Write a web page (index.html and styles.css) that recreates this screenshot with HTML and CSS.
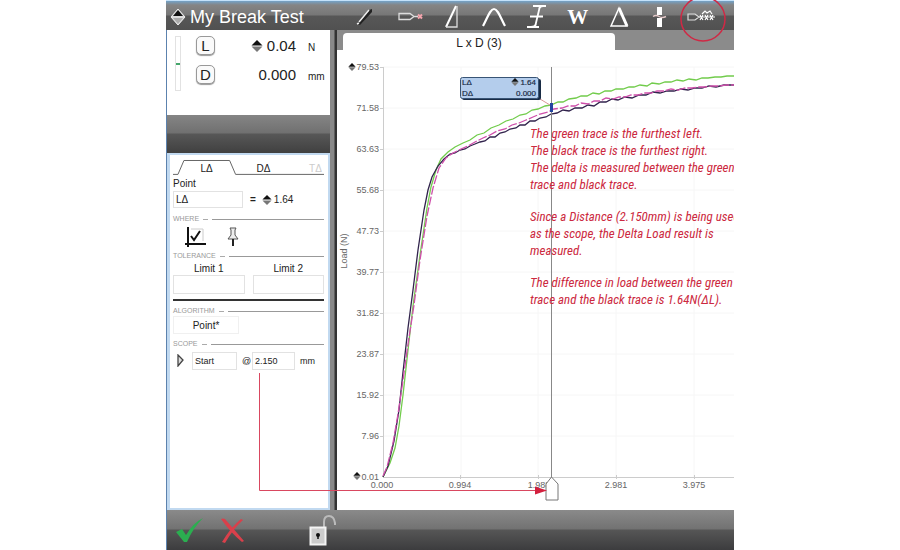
FILE: index.html
```
<!DOCTYPE html>
<html lang="en">

<head>
    <meta charset="UTF-8">
    <meta name="viewport" content="width=device-width, initial-scale=1.0">
    <title>My Break Test</title>
    <link rel="stylesheet" href="styles.css">
</head>

<body>
    <svg class="symbols" aria-hidden="true">
        <symbol id="peak" viewBox="0 0 12 12">
            <path d="M6 0 11.5 5.5H.5z" fill="#111" />
            <path d="M.5 6.5h11L6 12z" fill="#777" />
        </symbol>
    </svg>

    <div class="app">
        <!-- Title and tools -->
        <header class="topbar">
            <svg class="title-icon" viewBox="0 0 16 18">
                <path d="M8 1 15 9 8 17 1 9z" fill="#ddd" stroke="#eee" />
                <path d="M8 2 13 8H3z" fill="#111" />
                <path d="M3 10h10l-5 6z" fill="#aaa" />
            </svg>
            <h1>My Break Test</h1>
            <nav class="tools">
                <button class="tool edit" aria-label="Edit">
                    <svg viewBox="0 0 32 28"><path d="m9 21 12-14 3-1 0 3-12 13z" fill="#222" /><path d="m11 19 10-12m-12 14 2-1" stroke="#eee" stroke-width="1.5" /></svg>
                </button>
                <button class="tool" aria-label="Break">
                    <svg viewBox="0 0 32 28"><path d="M4 10.500h11l4 3-4 3H4zM19 13.500h4" fill="none" stroke="#ddd" stroke-width="1.3" /><path d="m23 11.500 4 4m0-4-4 4" stroke="#f5a4ad" stroke-width="2" /></svg>
                </button>
                <button class="tool" aria-label="Slope">
                    <svg viewBox="0 0 32 28"><path d="M9 24 19 3" fill="none" stroke="#fff" stroke-width="2" /><path d="M20 3v21H9" fill="none" stroke="#ddd" stroke-width="1.3" /></svg>
                </button>
                <button class="tool" aria-label="Peak">
                    <svg viewBox="0 0 32 28"><path d="M5 23C9 16 12 6 16 6s7 10 11 17" fill="none" stroke="#fff" stroke-width="2.2" /></svg>
                </button>
                <button class="tool" aria-label="Average">
                    <svg viewBox="0 0 32 28"><path d="M13 3h13M10 13.500h13M7 24h12M20 3l-5 21M19 6q1-3 4-3M16 21q-1 3-5 3" fill="none" stroke="#fff" stroke-width="1.8" /></svg>
                </button>
                <button class="tool work">W</button>
                <button class="tool" aria-label="Delta">
                    <svg viewBox="0 0 32 28"><path d="m15 5 8 18H7z" fill="none" stroke="#fff" stroke-width="1.5" /><path d="m15 5 8 18" stroke="#fff" stroke-width="3" /></svg>
                </button>
                <button class="tool" aria-label="Split">
                    <svg viewBox="0 0 32 28"><path d="M12 4h5v8h-5zm0 11h5v9h-5z" fill="#fff" /><path d="M8 13.500q3-2 6 0t7 0" fill="none" stroke="#e5caca" stroke-width="1.5" /></svg>
                </button>
                <button class="tool" aria-label="Break count">
                    <svg viewBox="0 0 32 28"><path d="M1 11h7l4 3-4 3H1z" fill="none" stroke="#ddd" stroke-width="1.2" /><path d="M12 14h16M13 12l3 5m0-5-3 5m5-5 3 5m0-5-3 5m5-5 3 5m0-5-3 5M15 11l3-3 2 2 3-2 2 3" fill="none" stroke="#fff" stroke-width="1.2" /></svg>
                </button>
            </nav>
        </header>

        <main class="workspace">
            <aside class="sidebar">
                <!-- Live readings -->
                <section class="readings">
                    <div class="gauge"></div>
                    <div class="reading">
                        <button class="key">L</button>
                        <span class="value"><svg class="peak"><use href="#peak" /></svg>0.04</span>
                        <span class="unit">N</span>
                    </div>
                    <div class="reading">
                        <button class="key">D</button>
                        <span class="value">0.000</span>
                        <span class="unit">mm</span>
                    </div>
                </section>
                <div class="strip"></div>

                <!-- Result settings -->
                <form class="settings">
                    <div class="tabs">
                        <svg class="tab-outline" viewBox="0 0 152 18" preserveAspectRatio="xMinYMin">
                            <path d="M0 15.500h5L11 1.500h46l6 14h89" fill="none" stroke="#666" />
                        </svg>
                        <button type="button" class="tab">LΔ</button>
                        <button type="button" class="tab">DΔ</button>
                        <button type="button" class="tab faded">TΔ</button>
                    </div>
                    <label class="name-label" for="name">Point</label>
                    <div class="name-row">
                        <input id="name" class="name" value="LΔ">
                        <b>=</b>
                        <span class="result"><svg class="peak small"><use href="#peak" /></svg>1.64</span>
                    </div>
                    <h2>WHERE</h2>
                    <div class="where">
                        <button type="button" aria-label="On graph">
                            <svg width="22" height="22" viewBox="0 0 22 22"><path d="M3 1v20M0 18h21" stroke="#111" stroke-width="2" /><path d="M6 3h12v12" fill="none" stroke="#ccc" /><path d="m6 10 3 4 6-9" fill="none" stroke="#111" stroke-width="2" /></svg>
                        </button>
                        <button type="button" aria-label="Pin">
                            <svg width="12" height="22" viewBox="0 0 12 22"><path d="M3 2h6L8 4v5l3 4H1l3-4V4z" fill="#eee" stroke="#555" /><path d="M6 13v7" stroke="#222" stroke-width="2" /></svg>
                        </button>
                    </div>
                    <h2>TOLERANCE</h2>
                    <div class="limits">
                        <label>Limit 1<input></label>
                        <label>Limit 2<input></label>
                    </div>
                    <h2>ALGORITHM</h2>
                    <button type="button" class="algorithm">Point*</button>
                    <h2>SCOPE</h2>
                    <div class="scope">
                        <svg width="8" height="13" viewBox="0 0 8 13"><path d="m1 1 5 5-5 6z" fill="#ddd" stroke="#444" stroke-width="1.3" /></svg>
                        <input class="start" value="Start" aria-label="Scope">
                        <label for="distance">@</label>
                        <input id="distance" class="distance" value="2.150">
                        <span>mm</span>
                    </div>
                </form>
            </aside>
            <div class="divider"></div>

            <!-- Graph -->
            <section class="graph">
                <div class="graph-tabs">
                    <button class="graph-tab">L x D (3)</button>
                </div>
                <svg class="plot" viewBox="337 50 397 460">
                    <path class="grid" d="M383 67h351M383 108h351M383 149h351M383 190h351M383 231h351M383 272h351M383 313h351M383 354h351M383 395h351M383 436h351M461 67v410M538 67v410M616 67v410M694 67v410" />
                    <path class="axis" d="M383.500 67v410.500H734M380 67.500h3M380 108.500h3M380 149.500h3M380 190.500h3M380 231.500h3M380 272.500h3M380 313.500h3M380 354.500h3M380 395.500h3M380 436.500h3M460.500 475v4M538.500 475v4M616.500 475v4M694.500 475v4" />
                    <g class="y-labels">
                        <text x="379" y="70">79.53</text>
                        <text x="379" y="111">71.58</text>
                        <text x="379" y="152">63.63</text>
                        <text x="379" y="193">55.68</text>
                        <text x="379" y="234">47.73</text>
                        <text x="379" y="275">39.77</text>
                        <text x="379" y="316">31.82</text>
                        <text x="379" y="357">23.87</text>
                        <text x="379" y="398">15.92</text>
                        <text x="379" y="439">7.96</text>
                        <text x="379" y="480">0.01</text>
                    </g>
                    <use href="#peak" x="348" y="63" width="8" height="8" />
                    <use href="#peak" x="353" y="472" width="8" height="8" />
                    <g class="x-labels">
                        <text x="382" y="488">0.000</text>
                        <text x="460" y="488">0.994</text>
                        <text x="539" y="488">1.988</text>
                        <text x="616" y="488">2.981</text>
                        <text x="694" y="488">3.975</text>
                    </g>
                    <text class="axis-title" transform="translate(347 251) rotate(-90)">Load (N)</text>

                    <path class="trace green" d="M383 477 390 463 395 448 399 426 403 395 408 350 413 306 420 255 427 208 431 187 436 170 441 159 448 152 455 147 463 143 470 140 477 135 484 133 491 128 499 125 506 121 513 119 520 115 526 114 532 110 538 109 545 106 551 105 558 102 563 102 569 99 576 98 581 96 587 96 593 93 599 94 605 91 611 91 616 89 623 89 629 87 634 87 640 85 647 86 652 83 659 84 665 82 671 82 677 80 683 81 689 79 696 80 702 78 708 78 715 77 721 77 727 76 734 76" />
                    <path class="trace black" d="M383 477 388 466 394 441 399 410 403 372 408 328 413 290 418 250 424 210 428 190 432 177 438 166 444 159 450 154 455 153 460 150 465 149 470 146 475 144 480 142 485 141 490 137 495 137 500 133 505 132 510 129 516 128 520 125 525 125 530 121 535 121 540 118 546 117 551 114 557 113 563 110 569 111 575 108 582 108 588 105 594 106 600 102 606 102 612 99 618 100 625 97 632 98 639 95 646 95 653 92 660 93 667 91 674 91 681 89 688 90 695 88 702 88 709 86 716 87 724 85 734 85" />
                    <path class="trace magenta" d="M383 476 387 467 393 443 398 414 403 380 408 344 414 305 420 260 427 216 433 188 439 168 446 158 453 153 461 149 468 146 475 142 483 138 490 135 497 131 505 129 512 125 519 123 526 120 533 117 540 114 548 112 554 109 562 108 568 106 575 106 581 103 588 104 594 101 600 101 606 98 613 99 619 97 625 97 631 95 638 95 644 93 651 93 657 91 664 91 671 89 678 90 685 88 692 88 698 87 705 87 712 86 719 86 726 85 734 85" />

                    <!-- Scope cursor -->
                    <path d="M551.500 67v410" stroke="#888" />
                    <path d="M540 99 550 105" stroke="#d99" />
                    <path d="M551.500 103v9" stroke="#2446a0" stroke-width="3" />
                    <path d="M551.500 477 558 484v16h-12v-16z" fill="#fff" stroke="#777" />

                    <g class="callout">
                        <rect x="462" y="79" width="79" height="21" rx="2" fill="#192b45" />
                        <rect x="460.500" y="77.500" width="78" height="21" rx="2" fill="#b4cdec" stroke="#385475" />
                        <text x="462" y="85">LΔ</text>
                        <text x="462" y="96">DΔ</text>
                        <use href="#peak" x="511" y="78" width="8" height="8" />
                        <text x="536" y="85" text-anchor="end">1.64</text>
                        <text x="536" y="96" text-anchor="end">0.000</text>
                    </g>
                </svg>
                <div class="note">
                    <p>The green trace is the furthest left.<br>The black trace is the furthest right.<br>The delta is measured between the green<br>trace and black trace.</p>
                    <p>Since a Distance (2.150mm) is being used<br>as the scope, the Delta Load result is<br>measured.</p>
                    <p>The difference in load between the green<br>trace and the black trace is 1.64N(ΔL).</p>
                </div>
            </section>
        </main>

        <footer class="actions">
            <button class="accept" aria-label="Accept">
                <svg width="30" height="28" viewBox="0 0 30 28"><path d="m1 16 6-3 4 6Q18 7 28 2 18 12 12 26H9z" fill="#2bae50" /></svg>
            </button>
            <button class="cancel" aria-label="Cancel">
                <svg width="28" height="28" viewBox="0 0 28 28"><path d="M2 3q2-1 4 0l19 22-2 1Q12 17 2 3zM22 3l2 1Q14 13 6 27l-3-1Q12 11 22 3z" fill="#d9404b" /></svg>
            </button>
            <button class="lock" aria-label="Unlock">
                <svg width="28" height="34" viewBox="0 0 28 34"><path d="M15 14V9q0-6 5-6t6 7v2" fill="none" stroke="#bbb" stroke-width="2" /><path d="M1.500 14.500h15v17h-15z" fill="#ccc" stroke="#f4f4f4" stroke-width="2" /><circle cx="9" cy="22" r="2" fill="#111" /><path d="M9 22v4" stroke="#111" stroke-width="1.500" /></svg>
            </button>
        </footer>

        <!-- Red markup over the whole window -->
        <svg class="markup" viewBox="0 0 568 550">
            <circle cx="537" cy="19" r="22" fill="none" stroke="#cf2945" stroke-width="1.500" />
            <path d="M93.500 373v117.500H372" fill="none" stroke="#d94860" />
            <path d="m369 486.500 12 4-12 4z" fill="#d3203e" />
        </svg>
    </div>
</body>

</html>
```
FILE: styles.css
```
/* General Styles */
* {
    box-sizing: border-box;
}

body {
    margin: 0;
    background: #fff;
    color: #222;
    font-family: "Liberation Sans", Arial, sans-serif;
    font-size: 10px;
}

button {
    padding: 0;
    border: none;
    background: none;
    color: inherit;
    font: inherit;
    cursor: pointer;
}

input {
    min-width: 0;
    border: 1px solid #e2e2e2;
    background: #fff;
    color: inherit;
    font: inherit;
}

svg {
    display: block;
}

.symbols {
    position: absolute;
    width: 0;
    height: 0;
}

.app {
    position: relative;
    display: flex;
    flex-direction: column;
    max-width: 568px;
    min-height: 100vh;
    margin: 0 auto;
    overflow: hidden;
}

/* Top bar */
.topbar {
    display: flex;
    align-items: center;
    height: 30px;
    padding: 2px 15px 0 4px;
    border-top: 1px solid #c4e2fa;
    background: linear-gradient(#74a3c8, #858585 4px, #777 14px, #575757 15px, #515151);
    color: #fff;
}

.title-icon {
    width: 16px;
    height: 18px;
}

h1 {
    margin: 0 0 0 4px;
    font-size: 18px;
    font-weight: normal;
    line-height: 26px;
    white-space: nowrap;
}

.tools {
    display: flex;
    flex: 0 1 371px;
    justify-content: space-between;
    margin-left: auto;
}

.tool {
    width: 32px;
    height: 28px;
}

.edit {
    margin-right: 5px;
}

.work {
    font: bold 21px/28px "Liberation Serif", serif;
}

/* Sidebar */
.workspace {
    display: flex;
    flex: 1;
}

.sidebar {
    display: flex;
    flex: 0 0 164px;
    flex-direction: column;
    min-width: 0;
    border-left: 1px solid #5c82ae;
}

.readings {
    position: relative;
    display: flex;
    flex-direction: column;
    gap: 8px;
    height: 85px;
    padding: 5px 4px 0 29px;
}

.gauge {
    position: absolute;
    top: 6px;
    left: 8px;
    width: 6px;
    height: 55px;
    border: 1px solid #e2e2e2;
    background: linear-gradient(#fff 26px, #45a66b 26px, #45a66b 28px, #fff 28px);
}

.reading {
    display: flex;
    align-items: center;
    height: 21px;
}

.key {
    width: 19px;
    height: 19px;
    border: 1px solid #999;
    border-radius: 5px;
    box-shadow: 0 1px 1px #999;
    background: #fafafa;
    font-size: 15px;
    line-height: 17px;
}

.value {
    display: flex;
    flex: 1;
    align-items: center;
    justify-content: flex-end;
    gap: 4px;
    font-size: 15px;
}

.peak {
    width: 12px;
    height: 12px;
}

.peak.small {
    width: 10px;
    height: 10px;
}

.unit {
    width: 18px;
    margin-left: 12px;
    padding-top: 4px;
}

.strip {
    height: 38px;
    background: linear-gradient(#858585, #707070 18px, #575757 19px, #404040);
}

.settings {
    flex: 1;
    padding: 4px 4px 4px 3px;
    border: solid #c1d9f0;
    border-width: 2px 2px 2px 3px;
}

.tabs {
    position: relative;
    display: flex;
    height: 18px;
    overflow: hidden;
}

.tab-outline {
    position: absolute;
    inset: 0;
    width: 100%;
    height: 100%;
}

.tab {
    position: relative;
    flex: 0 0 57px;
    padding-left: 10px;
}

.tab.faded {
    flex: 1;
    padding-left: 20px;
    color: #ccc;
}

.name-label {
    display: block;
    line-height: 13px;
}

.name-row {
    display: flex;
    align-items: center;
    height: 19px;
}

.name {
    width: 70px;
    height: 17px;
    margin-right: 7px;
}

.result {
    display: flex;
    align-items: center;
    gap: 2px;
    margin-left: 6px;
}

h2 {
    display: flex;
    align-items: center;
    gap: 4px;
    margin: 5px 0 0;
    color: #999;
    font-size: 7px;
    font-weight: normal;
    line-height: 10px;
}

h2::before {
    order: 1;
    width: 5px;
    height: 1px;
    background: #aaa;
    content: "";
}

h2::after {
    order: 2;
    flex: 1;
    height: 1px;
    background: #999;
    content: "";
}

.where {
    display: flex;
    align-items: flex-start;
    gap: 20px;
    height: 22px;
    padding: 2px 0 0 12px;
}

.limits {
    display: flex;
    gap: 8px;
    padding: 1px 0 5px;
    border-bottom: 2px solid #333;
}

.limits label {
    flex: 1;
    min-width: 0;
    line-height: 13px;
    text-align: center;
}

.limits input {
    display: block;
    width: 100%;
    height: 19px;
}

.algorithm {
    display: block;
    width: 66px;
    height: 18px;
    border: 1px solid #f0f0f0;
}

.scope {
    display: flex;
    align-items: center;
    height: 23px;
    padding-left: 4px;
    font-size: 9px;
}

.scope input {
    height: 18px;
}

.scope .start {
    width: 45px;
    margin: 0 5px 0 7px;
}

.scope .distance {
    width: 43px;
    margin: 0 5px 0 0;
}

.scope label {
    width: 10px;
}

.divider {
    flex: 0 0 7px;
    background: linear-gradient(to right, #898989 4px, #333 5px);
}

/* Graph */
.graph {
    position: relative;
    flex: 1;
    min-width: 0;
    overflow: hidden;
}

.graph-tabs {
    height: 20px;
    padding: 3px 30% 0 6px;
    background: #8b8b8b;
}

.graph-tab {
    display: block;
    width: 100%;
    height: 17px;
    border-radius: 4px 4px 0 0;
    background: #fff;
    font-size: 12px;
    line-height: 20px;
}

.plot {
    width: 100%;
}

.grid {
    stroke: #f6f6f6;
}

.axis {
    fill: none;
    stroke: #ccc;
}

.y-labels,
.x-labels,
.axis-title {
    fill: #666;
    font-size: 9px;
}

.y-labels {
    text-anchor: end;
}

.x-labels,
.axis-title {
    text-anchor: middle;
}

.trace {
    fill: none;
    stroke-width: 1.3;
}

.green {
    stroke: #72cc4c;
}

.black {
    stroke: #31234c;
}

.magenta {
    stroke: #cf4fab;
    stroke-dasharray: 9 2;
}

.callout text {
    fill: #192b45;
    stroke: #192b45;
    stroke-width: 0.2;
    font-size: 8px;
}

.note {
    position: absolute;
    top: 95px;
    left: 193px;
    color: #cc2940;
    font-family: "Liberation Sans Narrow", "Roboto Condensed", "Liberation Sans", sans-serif;
    font-size: 13px;
    font-style: italic;
    line-height: 17px;
    white-space: nowrap;
}

.note p {
    margin: 0 0 15px;
}

/* Bottom bar */
.actions {
    display: flex;
    align-items: center;
    height: 40px;
    padding-left: 8px;
    border-left: 1px solid #5c82ae;
    background: linear-gradient(#8a8a8a, #727272 19px, #565656 20px, #3c3c3e);
}

.cancel {
    margin-left: 14px;
}

.lock {
    margin-left: 62px;
}

.markup {
    position: absolute;
    top: 0;
    left: 0;
    width: 100%;
    pointer-events: none;
}
```
